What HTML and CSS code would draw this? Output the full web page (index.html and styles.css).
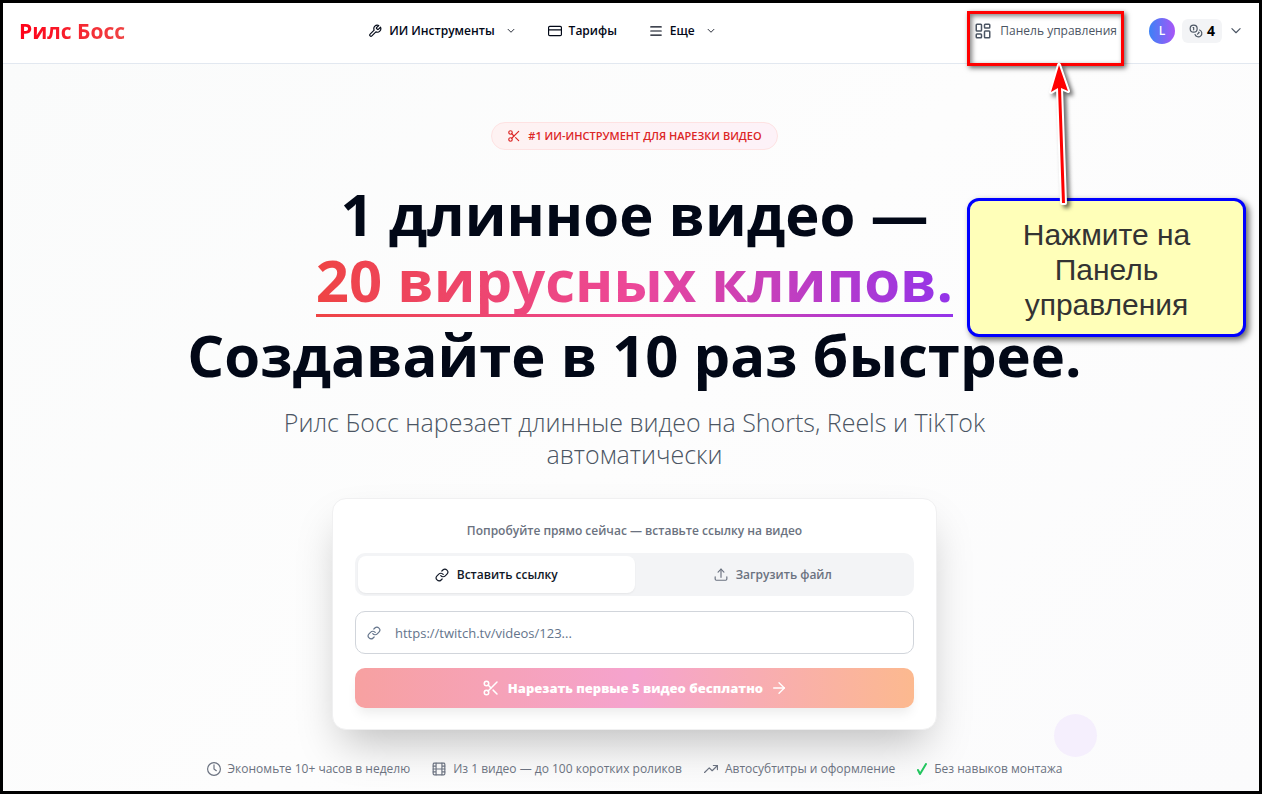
FILE: index.html
```html
<!DOCTYPE html>
<html lang="ru">
<head>
<meta charset="utf-8">
<meta name="viewport" content="width=device-width, initial-scale=1">
<title>Рилс Босс</title>
<link rel="stylesheet" href="styles.css">
</head>
<body>
<svg class="sprite" aria-hidden="true">
  <symbol id="i-down" viewBox="0 0 24 24"><path d="m5 8 7 7 7-7"/></symbol>
  <symbol id="i-link" viewBox="0 0 24 24"><path d="M10 13a5 5 0 0 0 7.54.54l3-3a5 5 0 0 0-7.07-7.07l-1.72 1.71"/><path d="M14 11a5 5 0 0 0-7.54-.54l-3 3a5 5 0 0 0 7.07 7.07l1.71-1.71"/></symbol>
  <symbol id="i-cut" viewBox="0 0 24 24"><circle cx="6" cy="6" r="3"/><path d="M8.12 8.12 12 12"/><path d="M20 4 8.12 15.88"/><circle cx="6" cy="18" r="3"/><path d="M14.8 14.8 20 20"/></symbol>
</svg>
<header class="header">
  <a class="logo" href="#">Рилс Босс</a>
  <nav class="nav">
    <button class="nav-item" type="button">
      <svg class="icon icon-14" viewBox="0 0 24 24"><path d="M14.7 6.3a1 1 0 0 0 0 1.4l1.6 1.6a1 1 0 0 0 1.4 0l3.77-3.77a6 6 0 0 1-7.94 7.94l-6.91 6.91a2.12 2.12 0 0 1-3-3l6.91-6.91a6 6 0 0 1 7.94-7.94l-3.76 3.76z"/></svg>
      <span>ИИ Инструменты</span>
      <svg class="icon icon-10 nav-arrow"><use href="#i-down"/></svg>
    </button>
    <a class="nav-item" href="#">
      <svg class="icon icon-14" viewBox="0 0 24 24"><rect x="1" y="4" width="22" height="16" rx="2"/><path d="M1 10h22"/></svg>
      <span>Тарифы</span>
    </a>
    <button class="nav-item" type="button">
      <svg class="icon icon-14" viewBox="0 0 24 24"><path d="M3 5h18M3 12h18M3 19h18"/></svg>
      <span>Еще</span>
      <svg class="icon icon-10 nav-arrow"><use href="#i-down"/></svg>
    </button>
  </nav>
  <div class="account">
    <a class="dashboard" href="#">
      <svg class="icon icon-18" viewBox="0 0 24 24"><rect x="3" y="3" width="7" height="9" rx="1"/><rect x="14" y="3" width="7" height="5" rx="1"/><rect x="14" y="12" width="7" height="9" rx="1"/><rect x="3" y="16" width="7" height="5" rx="1"/></svg>
      <span>Панель управления</span>
    </a>
    <button class="user" type="button">
      <span class="avatar">L</span>
      <span class="credits">
        <svg class="icon icon-14" viewBox="0 0 24 24"><circle cx="8" cy="8" r="6"/><path d="M18.09 10.37A6 6 0 1 1 10.34 18"/><path d="M7 6h1v4"/><path d="m16.71 13.88.7.71-2.82 2.82"/></svg>
        <span>4</span>
      </span>
      <svg class="icon icon-14"><use href="#i-down"/></svg>
    </button>
  </div>
</header>
<main class="hero">
  <p class="badge"><svg class="icon icon-14"><use href="#i-cut"/></svg><span>#1 ИИ-инструмент для нарезки видео</span></p>
  <h1 class="title">
    <span class="title-line">1 длинное видео —</span>
    <span class="title-accent">20 вирусных клипов.</span>
    <span class="title-line">Создавайте в 10 раз быстрее.</span>
  </h1>
  <p class="subtitle">Рилс Босс нарезает длинные видео на Shorts, Reels и TikTok автоматически</p>
  <form class="card">
    <label class="card-label" for="url">Попробуйте прямо сейчас — вставьте ссылку на видео</label>
    <div class="tabs">
      <button class="tab tab-active" type="button"><svg class="icon icon-14"><use href="#i-link"/></svg><span>Вставить ссылку</span></button>
      <button class="tab" type="button"><svg class="icon icon-14" viewBox="0 0 24 24"><path d="M22 15v4a2 2 0 0 1-2 2H4a2 2 0 0 1-2-2v-4"/><path d="m7 7 5-5 5 5"/><path d="M12 2v14"/></svg><span>Загрузить файл</span></button>
    </div>
    <div class="field">
      <svg class="icon icon-14"><use href="#i-link"/></svg>
      <input class="field-input" id="url" type="url" placeholder="https://twitch.tv/videos/123...">
    </div>
    <button class="submit" type="button">
      <svg class="icon icon-18"><use href="#i-cut"/></svg>
      <span>Нарезать первые 5 видео бесплатно</span>
      <svg class="icon icon-16" viewBox="0 0 24 24"><path d="M4 12h16"/><path d="m12 4 8 8-8 8"/></svg>
    </button>
  </form>
  <ul class="features">
    <li class="feature"><svg class="icon icon-14" viewBox="0 0 24 24"><circle cx="12" cy="12" r="11"/><path d="M12 5v7l4 3"/></svg><span>Экономьте 10+ часов в неделю</span></li>
    <li class="feature"><svg class="icon icon-14" viewBox="0 0 24 24"><rect x="2" y="2" width="20" height="20" rx="2"/><path d="M7 2v20M17 2v20M2 12h20M2 7h5M2 17h5M17 7h5M17 17h5"/></svg><span>Из 1 видео — до 100 коротких роликов</span></li>
    <li class="feature"><svg class="icon icon-14" viewBox="0 0 24 24"><path d="m1 18 8-8 5 5 9-9"/><path d="M16 6h7v7"/></svg><span>Автосубтитры и оформление</span></li>
    <li class="feature"><svg class="icon check" viewBox="0 0 10 12"><path d="m1 7 2 4 6-10"/></svg><span>Без навыков монтажа</span></li>
  </ul>
  <span class="dot"></span>
</main>
<aside class="guide">
  <div class="guide-frame"></div>
  <div class="guide-note">Нажмите на Панель управления</div>
  <svg class="guide-arrow" viewBox="0 0 40 150">
    <path class="arrow-edge" d="M22 147 18 32 11 36 19 9 28 35 21 32 25 147z"/>
    <path class="arrow-fill" d="M22 147 18 32 11 36 19 9 28 35 21 32 25 147z"/>
  </svg>
</aside>
</body>
</html>
```
FILE: styles.css
```css
* {
  box-sizing: border-box;
}

body {
  position: relative;
  display: flex;
  flex-direction: column;
  min-height: 100vh;
  margin: 0;
  border: 3px solid #000;
  background: #fff;
  color: #020817;
  font-family: "Open Sans", "Noto Sans", sans-serif;
  font-size: 12px;
  line-height: 20px;
}

button,
input {
  padding: 0;
  border: 0;
  background: none;
  color: inherit;
  font: inherit;
}

a {
  color: inherit;
  text-decoration: none;
}

.sprite {
  position: absolute;
  width: 0;
  height: 0;
}

.icon {
  flex: none;
  fill: none;
  stroke: currentColor;
  stroke-width: 2;
  stroke-linecap: round;
  stroke-linejoin: round;
}

.icon-10 { width: 10px; height: 10px; }
.icon-14 { width: 14px; height: 14px; }
.icon-16 { width: 16px; height: 16px; }
.icon-18 { width: 18px; height: 18px; }

.header {
  display: grid;
  grid-template-columns: 1fr auto 1fr;
  align-items: center;
  height: 61px;
  padding: 0 16px 4px;
  border-bottom: 1px solid #e2e8f0;
}

.logo {
  justify-self: start;
  background: linear-gradient(90deg, #ff0018, #ef4444);
  background-clip: text;
  color: transparent;
  font-size: 21px;
  font-weight: 700;
  line-height: 28px;
}

.nav {
  display: flex;
  gap: 32px;
  padding-right: 178px;
}

.nav-item {
  display: flex;
  align-items: center;
  gap: 7px;
  font-weight: 600;
  white-space: nowrap;
}

.nav-arrow {
  margin-left: 4px;
}

.account,
.user,
.dashboard,
.credits {
  display: flex;
  align-items: center;
}

.account {
  justify-self: end;
  gap: 32px;
}

.dashboard {
  gap: 8px;
  color: #4b5563;
  white-space: nowrap;
}

.user {
  gap: 7px;
  color: #4b5563;
}

.avatar {
  width: 26px;
  height: 26px;
  border-radius: 50%;
  background: linear-gradient(90deg, #3b82f6, #a855f7);
  color: #fff;
  font-weight: 600;
  line-height: 26px;
}

.credits {
  gap: 4px;
  padding: 2px 7px;
  border-radius: 6px;
  background: #f3f4f6;
}

.credits span {
  color: #000;
  font-size: 14px;
  font-weight: 700;
}

.hero {
  position: relative;
  display: flex;
  flex: 1;
  flex-direction: column;
  align-items: center;
  padding: 58px 0 8px 7px;
  overflow: hidden;
  background: linear-gradient(135deg, #fafbfb, #fdfdfd 50%, #fbfbfc);
}

.badge {
  display: flex;
  align-items: center;
  gap: 7px;
  margin: 0;
  padding: 3px 15px;
  border: 1px solid #fee2e2;
  border-radius: 14px;
  background: linear-gradient(90deg, #fef2f2, #fdf2f8);
  color: #dc2626;
  font-size: 11px;
  font-weight: 600;
  text-transform: uppercase;
}

.title {
  display: flex;
  flex-direction: column;
  align-items: center;
  margin: 31px 0 0;
  font-size: 58px;
  font-weight: 700;
  line-height: 66px;
  white-space: nowrap;
}

.title-accent {
  margin-bottom: 5px;
  padding-bottom: 4px;
  background:
    linear-gradient(90deg, #ef4444, #ec4899 50%, #9333ea) bottom / 100% 3px no-repeat border-box,
    linear-gradient(90deg, #ef4444, #ec4899 50%, #9333ea) text;
  color: transparent;
}

.subtitle {
  max-width: 760px;
  margin: 18px 0 0;
  color: #4b5563;
  font-size: 25px;
  font-weight: 300;
  line-height: 32px;
  text-align: center;
}

.card {
  display: flex;
  flex-direction: column;
  width: 100%;
  max-width: 605px;
  margin-top: 28px;
  padding: 22px 22px 21px;
  border: 1px solid #f0f0f1;
  border-radius: 14px;
  background: #fff;
  box-shadow: 0 22px 44px -10px rgba(0, 0, 0, 0.25);
}

.card-label {
  margin-bottom: 12px;
  color: #6b7280;
  font-weight: 600;
  text-align: center;
}

.tabs {
  display: grid;
  grid-template-columns: 1fr 1fr;
  padding: 3px;
  border-radius: 10px;
  background: #f3f4f6;
}

.tab {
  display: flex;
  align-items: center;
  justify-content: center;
  gap: 8px;
  height: 37px;
  border-radius: 8px;
  color: #6b7280;
  font-weight: 600;
}

.tab-active {
  background: #fff;
  box-shadow: 0 1px 2px rgba(0, 0, 0, 0.06);
  color: #111827;
}

.field {
  display: flex;
  align-items: center;
  gap: 14px;
  height: 43px;
  margin-top: 15px;
  padding: 0 11px;
  border: 1px solid #d1d5db;
  border-radius: 10px;
  color: #64748b;
}

.field-input {
  flex: 1;
  outline: 0;
  font-size: 13px;
}

.field-input::placeholder {
  color: #64748b;
}

.submit {
  display: flex;
  align-items: center;
  justify-content: center;
  gap: 8px;
  height: 40px;
  margin-top: 14px;
  border-radius: 10px;
  background: linear-gradient(90deg, #f7a1a1, #f5a3ce 50%, #fcb98f);
  box-shadow: 0 8px 12px -3px rgba(0, 0, 0, 0.08);
  color: #fff;
  font-size: 13px;
  font-weight: 800;
}

.features {
  display: flex;
  gap: 22px;
  margin: 29px 0 0;
  padding: 0;
  color: #6b7280;
  list-style: none;
  white-space: nowrap;
}

.feature {
  display: flex;
  align-items: center;
  gap: 7px;
}

.check {
  width: 10px;
  height: 12px;
  color: #22c55e;
  stroke-width: 2;
}

.dot {
  position: absolute;
  right: 162px;
  bottom: 34px;
  width: 43px;
  height: 43px;
  border-radius: 50%;
  background: #f5effd;
}

.guide {
  position: absolute;
  top: 8px;
  right: 13px;
  width: 279px;
  pointer-events: none;
}

.guide-frame {
  width: 157px;
  height: 55px;
  border: 3px solid #f00;
  box-shadow: 2px 2px 5px rgba(0, 0, 0, 0.6), inset 2px 2px 5px rgba(0, 0, 0, 0.5);
}

.guide-note {
  margin-top: 132px;
  padding: 16px 40px 12px;
  border: 3px solid #00f;
  border-radius: 12px;
  background: #ffffb9;
  box-shadow: 3px 3px 6px rgba(0, 0, 0, 0.6);
  color: #333;
  font-family: "Liberation Sans", Arial, sans-serif;
  font-size: 30px;
  line-height: 35px;
  text-align: center;
}

.guide-arrow {
  position: absolute;
  top: 45px;
  left: 73px;
  width: 40px;
  height: 150px;
  overflow: visible;
  filter: drop-shadow(3px 3px 2px rgba(0, 0, 0, 0.6));
}

.arrow-edge {
  fill: #fff;
  stroke: #fff;
  stroke-width: 4;
  stroke-linejoin: round;
}

.arrow-fill {
  fill: #f00;
}
```
